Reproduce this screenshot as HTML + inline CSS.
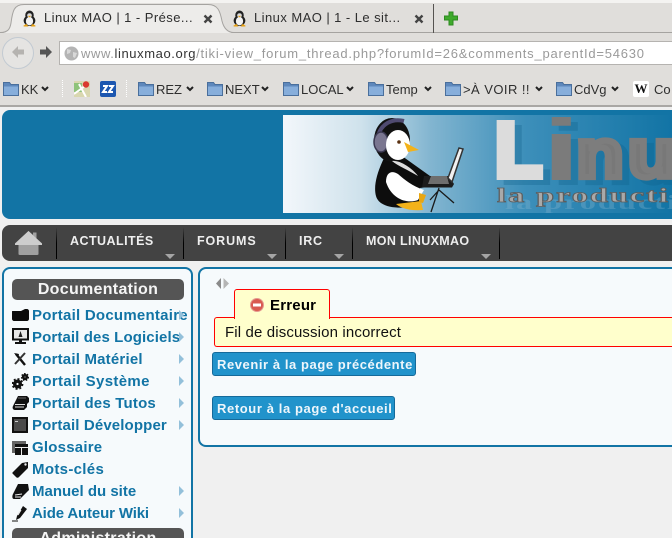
<!DOCTYPE html>
<html><head><meta charset="utf-8"><title>Linux MAO</title>
<style>
html,body{margin:0;padding:0;width:672px;height:538px;overflow:hidden;background:#f0f0f0}
#w{position:relative;width:672px;height:538px;overflow:hidden;background:#f0f0f0;font-family:"Liberation Sans",sans-serif}
.a{position:absolute;white-space:nowrap}
.tab{font-size:13px;letter-spacing:.44px;color:#2e2e2e;top:10px;line-height:16px}
.bm{font-size:13px;color:#2e2e2e;top:82px;line-height:16px}
.nav{font-size:12.5px;font-weight:bold;color:#eee;top:234px;line-height:15px}
.sep{top:227px;width:1px;height:32px;background:linear-gradient(#444,#000 50%,#000)}
.tri{top:254px;width:0;height:0;border-left:5px solid transparent;border-right:5px solid transparent;border-top:5px solid #a5a5a5}
.m{left:32px;font-size:15px;font-weight:bold;color:#1274a5;line-height:18px}
.ar{left:179px;width:0;height:0;border-top:5px solid transparent;border-bottom:5px solid transparent;border-left:5px solid #93c0da}
.btn{left:212px;height:22px;background:#2193cb;border:1px solid #156a9a;border-radius:3px;color:#eef6fb;font-size:13px;font-weight:bold;line-height:23px;padding-left:4px}
</style></head><body><div id="w">
<svg width="0" height="0" style="position:absolute">
<defs>
<symbol id="tux" viewBox="0 0 16 16">
<ellipse cx="8" cy="5" rx="4" ry="4.500" fill="#222"/>
<ellipse cx="8" cy="10" rx="5.500" ry="5" fill="#222"/>
<ellipse cx="8" cy="10.500" rx="3.400" ry="4" fill="#f2f2f2"/>
<ellipse cx="8" cy="5" rx="2.200" ry="2" fill="#ddd"/>
<path d="M6.500 5.500h3L8 7z" fill="#e8a010"/>
<path d="M2 15l3-2 2 2.500H3zM14 15l-3-2-2 2.500h4z" fill="#e8a010"/>
</symbol>
<symbol id="folder" viewBox="0 0 16 15">
<path d="M.5 1.500h6l1.500 2h7.500v11H.5z" fill="#5e88bc" stroke="#4a6f9c"/>
<path d="M1 5.500h14v8.500H1z" fill="#87aedb"/>
</symbol>
</defs>
</svg>

<!-- browser chrome -->
<div class="a" style="left:0;top:0;width:672px;height:3px;background:#f4f3f1"></div>
<div class="a" style="left:0;top:3px;width:672px;height:102px;background:#e0dedb"></div>
<div class="a" style="left:0;top:32px;width:672px;height:1px;background:#a5a3a0"></div>
<div class="a" style="left:0;top:105px;width:672px;height:2px;background:#a9a7a4"></div>
<div class="a" style="left:0;top:107px;width:672px;height:3px;background:#f0f0f0"></div>

<svg class="a" style="left:0;top:3px" width="340" height="31">
<path d="M1 30C8 30 10 26 11 20C12.500 8 14 2 24 2H208C218 2 220 8 222 18C224 26 228 29 232 30z" fill="#edecea"/>
<path d="M0 29.500C8 29.500 10 26 11 20C12.500 8 14 1.500 24 1.500H208C218 1.500 220 8 222 18C224 26 228 29.500 234 29.500H336" fill="none" stroke="#a5a3a0"/>
</svg>
<div class="a" style="left:433px;top:4px;width:1px;height:29px;background:#555350"></div>
<svg class="a" style="left:21px;top:10px" width="17" height="17"><use href="#tux"/></svg>
<div class="a tab" style="left:44px">Linux MAO | 1 - Prése...</div>
<svg class="a" style="left:203px;top:14px" width="10" height="10"><path d="M1.500 1.500l7 7M8.500 1.500l-7 7" stroke="#444" stroke-width="2.400"/></svg>
<svg class="a" style="left:231px;top:10px" width="17" height="17"><use href="#tux"/></svg>
<div class="a tab" style="left:254px">Linux MAO | 1 - Le sit...</div>
<svg class="a" style="left:414px;top:14px" width="10" height="10"><path d="M1.500 1.500l7 7M8.500 1.500l-7 7" stroke="#444" stroke-width="2.400"/></svg>
<svg class="a" style="left:444px;top:11px" width="15" height="15"><path d="M5 1h4v4h4.500v4H9v5H5V9H.5V5H5z" fill="#3faa2c" stroke="#2e8a20"/></svg>

<div class="a" style="left:59px;top:41px;width:613px;height:22px;background:#fff;border:1px solid #b5b3b0;border-right:0"></div>
<div class="a" style="left:2px;top:37px;width:30px;height:30px;border-radius:50%;background:#e5e4e2;border:1px solid #c2cad2"></div>
<svg class="a" style="left:10px;top:45px" width="16" height="14"><path d="M8 1L2 7l6 6V9.500h6v-5H8z" fill="#b5b3b0"/></svg>
<svg class="a" style="left:39px;top:45px" width="14" height="14"><path d="M7 1l6 6-6 6V9.500H1v-5h6z" fill="#555"/></svg>
<svg class="a" style="left:64px;top:46px" width="15" height="15"><circle cx="7.500" cy="7.500" r="7" fill="#b4b4b4"/><path d="M3 3l4 1-1 3-3 1zM9 6l4 1-2 5-2-1z" fill="#d8d8d8"/></svg>
<div class="a" style="left:81px;top:46px;width:591px;overflow:hidden;font-size:13px;line-height:16px;letter-spacing:.6px;color:#9a9a9a">www.<span style="color:#333">linuxmao.org</span><span style="letter-spacing:.78px">/tiki-view_forum_thread.php?forumId=26&amp;comments_parentId=54630</span></div>

<!-- bookmarks -->
<svg class="a" style="left:3px;top:81px" width="16" height="15"><use href="#folder"/></svg>
<div class="a bm" style="left:21px">KK</div>
<svg class="a" style="left:41px;top:86px" width="8" height="6"><path d="M1 1l3 3 3-3" fill="none" stroke="#222" stroke-width="2"/></svg>
<div class="a" style="left:62px;top:80px;height:17px;border-left:1px dotted #fff"></div>
<svg class="a" style="left:74px;top:81px" width="16" height="16"><rect width="16" height="16" fill="#d9d7b0"/><rect y="2" width="8" height="9" fill="#8fc37a"/><path d="M0 13L11 5M5 3l7 13" stroke="#fff" stroke-width="2"/><circle cx="12" cy="3.500" r="3.200" fill="#d93a2e"/></svg>
<svg class="a" style="left:100px;top:81px" width="16" height="16"><rect width="16" height="16" rx="2" fill="#1d57b0"/><path d="M3 5h4L3 11h4M9 5h4l-4 6h4" fill="none" stroke="#fff" stroke-width="2"/></svg>
<div class="a" style="left:126px;top:80px;height:17px;border-left:1px dotted #fff"></div>
<svg class="a" style="left:138px;top:81px" width="16" height="15"><use href="#folder"/></svg>
<div class="a bm" style="left:156px">REZ</div>
<svg class="a" style="left:186px;top:86px" width="8" height="6"><path d="M1 1l3 3 3-3" fill="none" stroke="#222" stroke-width="2"/></svg>
<svg class="a" style="left:207px;top:81px" width="16" height="15"><use href="#folder"/></svg>
<div class="a bm" style="left:225px">NEXT</div>
<svg class="a" style="left:261px;top:86px" width="8" height="6"><path d="M1 1l3 3 3-3" fill="none" stroke="#222" stroke-width="2"/></svg>
<svg class="a" style="left:283px;top:81px" width="16" height="15"><use href="#folder"/></svg>
<div class="a bm" style="left:301px">LOCAL</div>
<svg class="a" style="left:346px;top:86px" width="8" height="6"><path d="M1 1l3 3 3-3" fill="none" stroke="#222" stroke-width="2"/></svg>
<svg class="a" style="left:368px;top:81px" width="16" height="15"><use href="#folder"/></svg>
<div class="a bm" style="left:386px">Temp</div>
<svg class="a" style="left:424px;top:86px" width="8" height="6"><path d="M1 1l3 3 3-3" fill="none" stroke="#222" stroke-width="2"/></svg>
<svg class="a" style="left:445px;top:81px" width="16" height="15"><use href="#folder"/></svg>
<div class="a bm" style="left:463px;letter-spacing:.45px">&gt;À VOIR !!</div>
<svg class="a" style="left:535px;top:86px" width="8" height="6"><path d="M1 1l3 3 3-3" fill="none" stroke="#222" stroke-width="2"/></svg>
<svg class="a" style="left:556px;top:81px" width="16" height="15"><use href="#folder"/></svg>
<div class="a bm" style="left:574px">CdVg</div>
<svg class="a" style="left:611px;top:86px" width="8" height="6"><path d="M1 1l3 3 3-3" fill="none" stroke="#222" stroke-width="2"/></svg>
<div class="a" style="left:633px;top:81px;width:16px;height:16px;background:#fff;border-radius:2px;font:bold 13px/16px 'Liberation Serif',serif;text-align:center;color:#111">W</div>
<div class="a bm" style="left:654px">Co</div>

<!-- banner -->
<div class="a" style="left:2px;top:110px;width:670px;height:109px;background:#1274a5;border-radius:8px 0 0 8px"></div>
<svg class="a" style="left:283px;top:115px" width="389" height="98" viewBox="283 115 389 98">
<defs>
<linearGradient id="bg" x1="0" x2="1" y1="0" y2="0"><stop offset="0" stop-color="#f3f7fb"/><stop offset=".2" stop-color="#cfe2ec"/><stop offset=".38" stop-color="#82b5d0"/><stop offset=".62" stop-color="#3d8fba"/><stop offset="1" stop-color="#1274a5"/></linearGradient>
<linearGradient id="lg" gradientUnits="userSpaceOnUse" x1="497" x2="530" y1="118" y2="178"><stop offset="0" stop-color="#dcdcdc"/><stop offset=".45" stop-color="#979797"/><stop offset="1" stop-color="#6c6c6c"/></linearGradient>
</defs>
<rect x="283" y="115" width="389" height="98" fill="url(#bg)"/>
<!-- penguin -->
<path d="M385 156C378 170 373 185 376 196C379 207 395 209 412 207L422 200L420 188L428 187L430 176L402 156z" fill="#0d0d0d"/>
<ellipse cx="392" cy="140" rx="18" ry="22" fill="#111"/>
<path d="M378 136C381 124 392 118 404 121" fill="none" stroke="#4f4a70" stroke-width="4"/>
<ellipse cx="381" cy="142" rx="7" ry="10" fill="#7a7690" stroke="#3a3850" stroke-width="1.500"/>
<ellipse cx="398" cy="145" rx="12" ry="15" fill="#fff"/>
<circle cx="399" cy="142" r="1.800" fill="#5a3010"/>
<path d="M404 142L419 150L408 152z" fill="#f3b21a"/>
<path d="M392 161C400 160 412 168 418 176C408 170 398 166 392 161z" fill="#ddd"/>
<path d="M386 182C386 172 392 170 398 174C405 180 412 186 424 190L418 200C408 204 392 200 386 182z" fill="#fff"/>
<path d="M396 204L421 201L423 210C412 211 402 209 396 204z" fill="#f3b21a"/>
<path d="M419 193L426 195L423 203L419 202z" fill="#e8a612"/>
<path d="M424 176H449L454 184L452 187.500H422z" fill="#1c1c1c"/>
<path d="M431 176H447L449 184H428z" fill="#6e6e6e"/>
<path d="M448 178L459 148L463 149L452 182z" fill="#f1f1f1" stroke="#333" stroke-width="1.500"/>
<path d="M439 188L431 212M439 190L454 203M439 190L430 200" stroke="#1a1a1a" stroke-width="1.300"/>
<!-- logo -->
<g font-family="Liberation Sans" font-weight="bold">
<g transform="translate(7 5)" fill="#0e5f88" stroke="#0e5f88" opacity=".3">
<text transform="translate(495 176.500)" font-size="77" stroke-width="7">L</text>
<text transform="translate(542 180) scale(1.600 1)" font-size="87" stroke="none">i</text>
<text transform="translate(576.500 177) scale(1 .88)" font-size="77" stroke-width="7">n</text>
<text transform="translate(628 177) scale(1 .88)" font-size="77" stroke-width="7">u</text>
</g>
<text transform="translate(495 176.500)" font-size="77" fill="url(#lg)" stroke="url(#lg)" stroke-width="7">L</text>
<text transform="translate(542 180) scale(1.600 1)" font-size="87" fill="#7b7b7b">i</text>
<text transform="translate(576.500 177) scale(1 .88)" font-size="77" fill="#787878" stroke="#7d7d7d" stroke-width="7">n</text>
<text transform="translate(628 177) scale(1 .88)" font-size="77" fill="#787878" stroke="#7d7d7d" stroke-width="7">u</text>
</g>
<text transform="translate(505 209) scale(1.620 1)" font-family="Liberation Serif" font-weight="bold" font-size="20" fill="#8fbbd4" opacity=".3" letter-spacing="1.200">la producti</text>
<text transform="translate(497 202) scale(1.620 1)" font-family="Liberation Serif" font-weight="bold" font-size="20" fill="#a9a9a9" stroke="#5d5d5d" stroke-width=".8" letter-spacing="1.200">la producti</text>
</svg>

<!-- nav -->
<div class="a" style="left:2px;top:225px;width:670px;height:36px;background:#434343;border-radius:8px 0 0 8px"></div>
<svg class="a" style="left:14px;top:230px" width="29" height="26"><path d="M14.500 1L19 5V2.500h3.500v6L28 13.500v1.500h-3.500v9C24.500 25 23 25 22 25H7C6 25 4.500 25 4.500 24v-9H1v-1.500z" fill="#a0a0a0"/><path d="M14.500 1L28 13.500v1.500H1v-1.500z" fill="#cdcdcd"/></svg>
<div class="a sep" style="left:56px"></div>
<div class="a sep" style="left:183px"></div>
<div class="a sep" style="left:285px"></div>
<div class="a sep" style="left:352px"></div>
<div class="a sep" style="left:499px"></div>
<div class="a nav" style="left:70px;letter-spacing:.45px">ACTUALITÉS</div>
<div class="a nav" style="left:197px;letter-spacing:.9px">FORUMS</div>
<div class="a nav" style="left:299px;letter-spacing:.75px">IRC</div>
<div class="a nav" style="left:366px;letter-spacing:.35px">MON LINUXMAO</div>
<div class="a tri" style="left:165px"></div>
<div class="a tri" style="left:267px"></div>
<div class="a tri" style="left:334px"></div>
<div class="a tri" style="left:481px"></div>

<!-- left panel -->
<div class="a" style="left:2px;top:267px;width:187px;height:269px;background:#f6fafc;border:2px solid #1274a5;border-bottom:2px solid #f6fafc;border-radius:8px 8px 0 0"></div>
<div class="a" style="left:2px;top:536px;width:2px;height:2px;background:#1274a5"></div>
<div class="a" style="left:191px;top:536px;width:2px;height:2px;background:#1274a5"></div>
<div class="a" style="left:12px;top:279px;width:172px;height:21px;background:#555;border-radius:5px;color:#f5f5f5;font-size:16px;font-weight:bold;letter-spacing:.3px;line-height:21px;text-align:center">Documentation</div>

<svg class="a" style="left:12px;top:308px" width="17" height="14"><path d="M1 3h8l4-2h2c1 0 2 1 2 2v8c0 1-1 2-2 2H2c-1 0-2-1-2-2V4c0-1 0-1 1-1z" fill="#0b0b0b"/></svg>
<div class="a m" style="top:307px;letter-spacing:.25px">Portail Documentaire</div>
<svg class="a" style="left:12px;top:328px" width="17" height="17"><rect x="1" y="1" width="15" height="10.500" fill="#e8e8e8" stroke="#111" stroke-width="2"/><path d="M8.500 3L6.500 9h4z" fill="#222"/><rect x="7" y="12" width="3" height="2" fill="#111"/><rect x="3" y="14" width="11" height="2" fill="#111"/></svg>
<div class="a m" style="top:329px;letter-spacing:.11px">Portail des Logiciels</div>
<svg class="a" style="left:13px;top:352px" width="15" height="14"><path d="M3 2l9 11" stroke="#111" stroke-width="2.400"/><path d="M12 1L2 12" stroke="#333" stroke-width="2"/><path d="M1 1l5 1-1 4z" fill="#111"/></svg>
<div class="a m" style="top:351px;letter-spacing:.2px">Portail Matériel</div>
<svg class="a" style="left:12px;top:373px" width="17" height="17"><circle cx="5.500" cy="11" r="2.800" fill="none" stroke="#111" stroke-width="3.400"/><circle cx="5.500" cy="11" r="5" fill="none" stroke="#111" stroke-width="1.800" stroke-dasharray="2 1.900"/><circle cx="13" cy="4" r="1.800" fill="none" stroke="#111" stroke-width="2.600"/><circle cx="13" cy="4" r="3.400" fill="none" stroke="#111" stroke-width="1.400" stroke-dasharray="1.500 1.500"/></svg>
<div class="a m" style="top:373px;letter-spacing:.35px">Portail Système</div>
<svg class="a" style="left:12px;top:395px" width="17" height="16"><path d="M6 1h9l2 2v4l-2 2v3l-3 3H3c-2 0-3-2-2-4z" fill="#111"/><path d="M3 9.500h10M3 12h9" stroke="#ddd"/><path d="M6 3h8" stroke="#666"/></svg>
<div class="a m" style="top:395px;letter-spacing:.2px">Portail des Tutos</div>
<svg class="a" style="left:12px;top:417px" width="16" height="16"><rect width="16" height="16" fill="#111"/><rect x="2" y="2" width="12" height="12" fill="#4a4a4a"/><rect x="3" y="4" width="3" height="1" fill="#ccc"/></svg>
<div class="a m" style="top:417px;letter-spacing:.13px">Portail Développer</div>
<svg class="a" style="left:12px;top:441px" width="16" height="14"><rect width="14" height="12" fill="#666"/><rect x="3" y="3" width="13" height="11" fill="#111"/><path d="M3 6.500h13M9.500 6v8" stroke="#eee"/></svg>
<div class="a m" style="top:439px;letter-spacing:.22px">Glossaire</div>
<svg class="a" style="left:12px;top:461px" width="17" height="17"><path d="M1 11L10 2l6-1v6l-9 9c-1 1-2 1-3 0l-3-3c-1-1-1-1 0-2z" fill="#111"/><circle cx="13.500" cy="3.500" r="1.200" fill="#eee"/></svg>
<div class="a m" style="top:461px;letter-spacing:.33px">Mots-clés</div>
<svg class="a" style="left:12px;top:484px" width="17" height="16"><path d="M6 0h10l1 6-9 9H2c-2 0-2-3-1-5z" fill="#111"/><path d="M3 11l7-1M3 13h6" stroke="#eee"/></svg>
<div class="a m" style="top:483px">Manuel du site</div>
<svg class="a" style="left:12px;top:505px" width="17" height="17"><path d="M11 1l4 3-7 9-4 2 1-4z" fill="#111"/><path d="M9 5l-3 5" stroke="#eee"/><path d="M0 16h6" stroke="#111"/></svg>
<div class="a m" style="top:505px;letter-spacing:-.15px">Aide Auteur Wiki</div>

<div class="a ar" style="top:310px"></div>
<div class="a ar" style="top:332px"></div>
<div class="a ar" style="top:354px"></div>
<div class="a ar" style="top:376px"></div>
<div class="a ar" style="top:398px"></div>
<div class="a ar" style="top:420px"></div>
<div class="a ar" style="top:486px"></div>
<div class="a ar" style="top:508px"></div>

<div class="a" style="left:12px;top:528px;width:172px;height:10px;overflow:hidden;background:#555;border-radius:5px 5px 0 0;color:#f5f5f5;font-size:16px;font-weight:bold;letter-spacing:.3px;line-height:21px;text-align:center">Administration</div>

<!-- right panel -->
<div class="a" style="left:198px;top:267px;width:472px;height:176px;background:#f6fafc;border:2px solid #1274a5;border-right:0;border-radius:8px 0 0 8px"></div>
<svg class="a" style="left:215px;top:277px" width="15" height="13"><path d="M6 1L1 6.500 6 12z" fill="#8a8a8a"/><path d="M8.500 1L14 6.500 8.500 12z" fill="#b5b5b5"/></svg>
<div class="a" style="left:214px;top:317px;width:457px;height:28px;background:#ffc;border:1px solid #f00;border-right:0;border-radius:3px 0 0 3px"></div>
<div class="a" style="left:234px;top:289px;width:94px;height:29px;background:#ffc;border:1px solid #f00;border-bottom:0;border-radius:3px 3px 0 0"></div>
<svg class="a" style="left:250px;top:298px" width="14" height="14"><circle cx="7" cy="7" r="6.500" fill="#d95a50" stroke="#e49a90"/><rect x="3" y="5.500" width="8" height="3" fill="#fff"/></svg>
<div class="a" style="left:270px;top:298px;font-size:15px;font-weight:bold;letter-spacing:.2px;line-height:16px;color:#000">Erreur</div>
<div class="a" style="left:225px;top:325px;font-size:15px;letter-spacing:.13px;line-height:16px;color:#111">Fil de discussion incorrect</div>
<div class="a btn" style="top:352px;width:198px;letter-spacing:.57px">Revenir à la page précédente</div>
<div class="a btn" style="top:396px;width:177px;letter-spacing:.6px">Retour à la page d'accueil</div>
</div></body></html>
